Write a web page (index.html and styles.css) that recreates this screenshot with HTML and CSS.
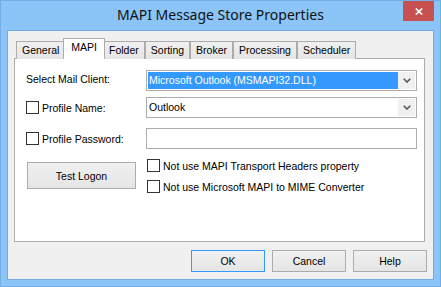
FILE: index.html
```html
<!DOCTYPE html>
<html>
<head>
<meta charset="utf-8">
<link rel="stylesheet" href="styles.css">
</head>
<body>
<div class="window">
  <div class="titlebar">
    <div></div>
    <div class="title">MAPI Message Store Properties</div>
    <div class="close"><svg width="8" height="7" viewBox="0 0 8 7"><path d="M0.8 0.5 L7.2 6.5 M7.2 0.5 L0.8 6.5" stroke="#fff" stroke-width="1.7" fill="none"/></svg></div>
  </div>
  <div class="client">
    <div class="tabs">
      <div class="tab">General</div>
      <div class="tab active">MAPI</div>
      <div class="tab">Folder</div>
      <div class="tab">Sorting</div>
      <div class="tab">Broker</div>
      <div class="tab">Processing</div>
      <div class="tab">Scheduler</div>
    </div>
    <div class="panel">
      <div class="row row1">
        <div class="lbl">Select Mail Client:</div>
        <div class="combo">
          <div class="combo-text selected">Microsoft Outlook (MSMAPI32.DLL)</div>
          <div class="combo-btn"><svg width="8" height="5" viewBox="0 0 8 5"><path d="M0.7 0.7 L4 4 L7.3 0.7" stroke="#555" stroke-width="1.6" fill="none"/></svg></div>
        </div>
      </div>
      <div class="row row2">
        <div class="lbl chk-lbl"><span class="box"></span><span>Profile Name:</span></div>
        <div class="combo">
          <div class="combo-text">Outlook</div>
          <div class="combo-btn"><svg width="8" height="5" viewBox="0 0 8 5"><path d="M0.7 0.7 L4 4 L7.3 0.7" stroke="#555" stroke-width="1.6" fill="none"/></svg></div>
        </div>
      </div>
      <div class="row row3">
        <div class="lbl chk-lbl"><span class="box"></span><span>Profile Password:</span></div>
        <div class="textbox"></div>
      </div>
      <div class="lower">
        <div class="left-col"><div class="btn logon">Test Logon</div></div>
        <div class="checks">
          <div class="check"><span class="box"></span><span>Not use MAPI Transport Headers property</span></div>
          <div class="check"><span class="box"></span><span>Not use Microsoft MAPI to MIME Converter</span></div>
        </div>
      </div>
    </div>
    <div class="buttons">
      <div class="btn dlg default">OK</div>
      <div class="btn dlg">Cancel</div>
      <div class="btn dlg">Help</div>
    </div>
  </div>
</div>
</body>
</html>
```

FILE: styles.css
```css
html, body {
  margin: 0;
  padding: 0;
}
body {
  font-family: "Liberation Sans", Arial, sans-serif;
  font-size: 10.5px;
  color: #000;
  background: #8BC5F7;
}
.window {
  width: 441px;
  height: 287px;
  box-sizing: border-box;
  background: #8BC5F7;
  border: 1px solid #74AEE6;
  display: flex;
  flex-direction: column;
}
.titlebar {
  height: 29px;
  display: grid;
  grid-template-columns: 37px 1fr 31px;
  padding-right: 6px;
}
.title {
  font-family: "Noto Sans", "Open Sans", sans-serif;
  font-size: 14px;
  line-height: 20px;
  padding-top: 4px;
  text-align: center;
  color: #111;
  white-space: nowrap;
}
.close {
  height: 20px;
  background: #C75050;
  display: flex;
  align-items: center;
  justify-content: center;
}
.client {
  margin: 0 6px;
  height: 250px;
  box-sizing: border-box;
  border: 1px solid #72ABE3;
  background: #F0F0F0;
  padding: 7px 8px 0 6px;
  display: flex;
  flex-direction: column;
}
.tabs {
  display: flex;
  align-items: flex-end;
  height: 21px;
  margin-left: 2px;
  margin-bottom: -1px;
  position: relative;
  z-index: 1;
}
.tab {
  height: 18px;
  box-sizing: border-box;
  border: 1px solid #ACACAC;
  border-bottom: none;
  padding: 0 5px;
  line-height: 16px;
  background: linear-gradient(#F0F0F0, #E5E5E5);
  white-space: nowrap;
}
.tab.active {
  height: 21px;
  margin: 0 -2px;
  padding: 0 7px;
  line-height: 16px;
  background: #fff;
  position: relative;
  z-index: 2;
}
.panel {
  height: 184px;
  box-sizing: border-box;
  border: 1px solid #ACACAC;
  background: #fff;
  padding: 11px 7px 0 11px;
  display: flex;
  flex-direction: column;
}
.row {
  display: flex;
  align-items: center;
  height: 21px;
}
.row2 { margin-top: 6px; }
.row3 { margin-top: 10px; }
.lbl {
  width: 120px;
  flex: none;
  display: flex;
  align-items: center;
}
.row1 .lbl { margin-top: -4px; }
.chk-lbl .box { margin-right: 3px; }
.box {
  width: 13px;
  height: 13px;
  box-sizing: border-box;
  border: 1px solid #333;
  background: #fff;
  flex: none;
  display: inline-block;
}
.combo {
  width: 271px;
  height: 21px;
  box-sizing: border-box;
  border: 1px solid #ACACAC;
  background: #fff;
  display: flex;
  padding: 1px;
}
.combo-text {
  flex: 1;
  line-height: 17px;
  padding-left: 1px;
  white-space: nowrap;
}
.combo-text.selected {
  background: #3399FF;
  color: #fff;
}
.combo-btn {
  width: 17px;
  flex: none;
  background: #F0F0F0;
  display: flex;
  align-items: center;
  justify-content: center;
}
.textbox {
  width: 271px;
  height: 21px;
  box-sizing: border-box;
  border: 1px solid #ACACAC;
  background: #fff;
}
.lower {
  display: flex;
  margin-top: 10px;
}
.left-col {
  width: 120px;
  flex: none;
  padding-top: 3px;
}
.btn {
  box-sizing: border-box;
  border: 1px solid #ACACAC;
  background: linear-gradient(#F0F0F0, #E5E5E5);
  display: flex;
  align-items: center;
  justify-content: center;
}
.logon {
  width: 109px;
  height: 27px;
  margin-left: 1px;
}
.checks {
  display: flex;
  flex-direction: column;
  gap: 8px;
  padding-left: 1px;
}
.check {
  display: flex;
  align-items: center;
  height: 13px;
}
.check .box { margin-right: 3px; }
.buttons {
  display: flex;
  justify-content: flex-end;
  gap: 7px;
  margin-top: 8px;
  margin-right: -2px;
}
.dlg {
  width: 74px;
  height: 22px;
}
.dlg.default {
  border-color: #3399FF;
}
```
